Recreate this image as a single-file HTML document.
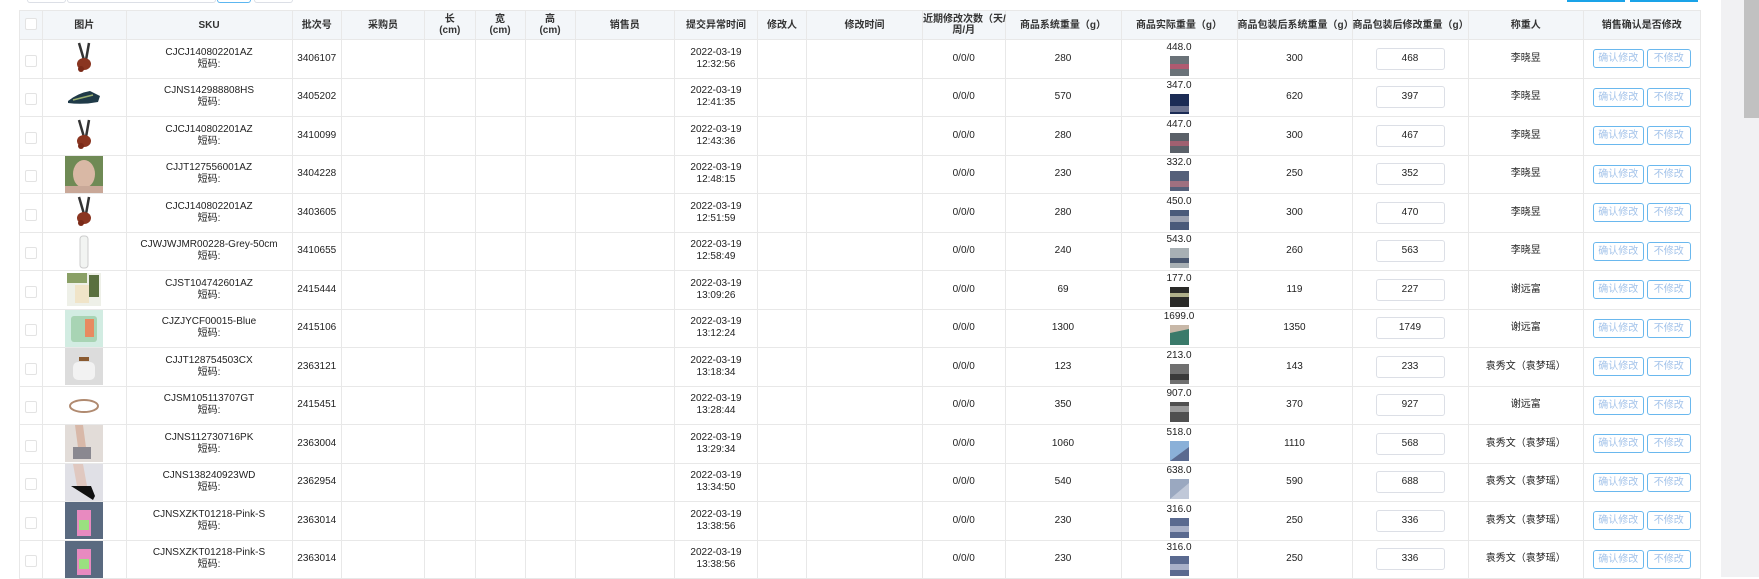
<!DOCTYPE html>
<html><head><meta charset="utf-8">
<style>
*{box-sizing:border-box;margin:0;padding:0}
body{width:1759px;height:577px;overflow:hidden;background:#fff;font-family:"Liberation Sans","Noto Sans CJK SC",sans-serif;font-size:10px;color:#222;position:relative}
.tb{position:absolute;top:0;height:3px;border:1px solid #dcdfe6;border-top:none;border-radius:0 0 3px 3px}
.bb{position:absolute;top:0;height:2px;background:#1aa3e8}
table{position:absolute;left:19px;top:10px;border-collapse:collapse;table-layout:fixed;width:1680px}
td,th{border:1px solid #e8e8e8;text-align:center;vertical-align:middle;line-height:12px;overflow:hidden;white-space:nowrap}
th{background:#f3f6f9;height:29px;font-weight:bold;color:#333;font-size:10px;line-height:11px}
td{height:38.5px}
.cb{display:inline-block;width:12px;height:12px;border:1px solid #e3e3e3;border-radius:2px;background:#fff;margin-top:8px}
.im{display:block;width:38px;height:37px;margin:0 auto}
.th{display:block;width:19px;height:20px;margin:2px auto 0}
.inp{display:inline-block;width:69px;height:22px;border:1px solid #dcdfe6;border-radius:3px;line-height:20px;font-size:10px}
.b1,.b2{display:inline-block;height:19px;line-height:17px;border:1px solid #6ab8ee;border-radius:3px;color:#a3c3ea;font-size:10px;background:#fff}
.b1{width:51px}.b2{width:44px;margin-left:3px}
.sc{position:absolute;left:1721px;top:0;width:38px;height:577px;background:#f1f1f3}
.th2{position:absolute;left:1744px;top:0;width:15px;height:118px;background:#c1c1c1}
</style></head><body>
<div class="tb" style="left:27px;width:39px"></div>
<div class="tb" style="left:67px;width:149px"></div>
<div class="tb" style="left:217px;width:34px;border-color:#5cb6f0"></div>
<div class="tb" style="left:254px;width:39px"></div>
<div class="bb" style="left:1567px;width:58px"></div>
<div class="bb" style="left:1630px;width:68px"></div>
<table>
<colgroup>
<col style="width:23px"><col style="width:83.5px"><col style="width:166px"><col style="width:49.5px"><col style="width:83px"><col style="width:50.5px"><col style="width:50px"><col style="width:50px"><col style="width:99.5px"><col style="width:83px"><col style="width:49px"><col style="width:116px"><col style="width:82.5px"><col style="width:116px"><col style="width:116px"><col style="width:115px"><col style="width:116px"><col style="width:115.5px"><col style="width:116.5px">
</colgroup>
<tr><th><span class="cb" style="margin-top:0"></span></th><th>图片</th><th>SKU</th><th>批次号</th><th>采购员</th><th>长<br>(cm)</th><th>宽<br>(cm)</th><th>高<br>(cm)</th><th>销售员</th><th>提交异常时间</th><th>修改人</th><th>修改时间</th><th style="overflow:visible">近期修改次数（天/<br>周/月</th><th>商品系统重量（g）</th><th>商品实际重量（g）</th><th>商品包装后系统重量（g）</th><th>商品包装后修改重量（g）</th><th>称重人</th><th>销售确认是否修改</th></tr>
<tr><td><span class="cb"></span></td><td><svg class="im" viewBox="0 0 38 37"><path d="M14 3l5 17M24 3l-3 17" stroke="#333" stroke-width="2.5"/><ellipse cx="19" cy="24" rx="7" ry="6" fill="#8a3520"/><circle cx="16" cy="29" r="3" fill="#7a2a18"/></svg></td><td>CJCJ140802201AZ<br>短码:</td><td>3406107</td><td></td><td></td><td></td><td></td><td></td><td>2022-03-19<br>12:32:56</td><td></td><td></td><td>0/0/0</td><td>280</td><td>448.0<svg class="th" viewBox="0 0 19 20"><rect width="19" height="20" fill="#6a7278"/><rect y="8" width="19" height="5" fill="#b05a70"/></svg></td><td>300</td><td><span class="inp">468</span></td><td>李晓昱</td><td><span class="b1">确认修改</span><span class="b2">不修改</span></td></tr>
<tr><td><span class="cb"></span></td><td><svg class="im" viewBox="0 0 38 37"><path d="M3 22q10-8 22-10l10 5-2 6q-15 3-30 1z" fill="#1f3a48"/><path d="M8 21l20-5" stroke="#9ab070" stroke-width="1.5"/></svg></td><td>CJNS142988808HS<br>短码:</td><td>3405202</td><td></td><td></td><td></td><td></td><td></td><td>2022-03-19<br>12:41:35</td><td></td><td></td><td>0/0/0</td><td>570</td><td>347.0<svg class="th" viewBox="0 0 19 20"><rect width="19" height="20" fill="#1c2c55"/><rect y="12" width="19" height="6" fill="#6c7390"/></svg></td><td>620</td><td><span class="inp">397</span></td><td>李晓昱</td><td><span class="b1">确认修改</span><span class="b2">不修改</span></td></tr>
<tr><td><span class="cb"></span></td><td><svg class="im" viewBox="0 0 38 37"><path d="M14 3l5 17M24 3l-3 17" stroke="#333" stroke-width="2.5"/><ellipse cx="19" cy="24" rx="7" ry="6" fill="#8a3520"/><circle cx="16" cy="29" r="3" fill="#7a2a18"/></svg></td><td>CJCJ140802201AZ<br>短码:</td><td>3410099</td><td></td><td></td><td></td><td></td><td></td><td>2022-03-19<br>12:43:36</td><td></td><td></td><td>0/0/0</td><td>280</td><td>447.0<svg class="th" viewBox="0 0 19 20"><rect width="19" height="20" fill="#5a6068"/><rect y="8" width="19" height="5" fill="#a06070"/></svg></td><td>300</td><td><span class="inp">467</span></td><td>李晓昱</td><td><span class="b1">确认修改</span><span class="b2">不修改</span></td></tr>
<tr><td><span class="cb"></span></td><td><svg class="im" viewBox="0 0 38 37"><rect width="38" height="37" fill="#6f8a55"/><ellipse cx="19" cy="18" rx="11" ry="14" fill="#d9b8a5"/><rect y="30" width="38" height="7" fill="#c9a898"/></svg></td><td>CJJT127556001AZ<br>短码:</td><td>3404228</td><td></td><td></td><td></td><td></td><td></td><td>2022-03-19<br>12:48:15</td><td></td><td></td><td>0/0/0</td><td>230</td><td>332.0<svg class="th" viewBox="0 0 19 20"><rect width="19" height="20" fill="#55607a"/><rect y="10" width="19" height="6" fill="#a07080"/></svg></td><td>250</td><td><span class="inp">352</span></td><td>李晓昱</td><td><span class="b1">确认修改</span><span class="b2">不修改</span></td></tr>
<tr><td><span class="cb"></span></td><td><svg class="im" viewBox="0 0 38 37"><path d="M14 3l5 17M24 3l-3 17" stroke="#333" stroke-width="2.5"/><ellipse cx="19" cy="24" rx="7" ry="6" fill="#8a3520"/><circle cx="16" cy="29" r="3" fill="#7a2a18"/></svg></td><td>CJCJ140802201AZ<br>短码:</td><td>3403605</td><td></td><td></td><td></td><td></td><td></td><td>2022-03-19<br>12:51:59</td><td></td><td></td><td>0/0/0</td><td>280</td><td>450.0<svg class="th" viewBox="0 0 19 20"><rect width="19" height="20" fill="#4a5a7a"/><rect y="6" width="19" height="6" fill="#9aa0b0"/></svg></td><td>300</td><td><span class="inp">470</span></td><td>李晓昱</td><td><span class="b1">确认修改</span><span class="b2">不修改</span></td></tr>
<tr><td><span class="cb"></span></td><td><svg class="im" viewBox="0 0 38 37"><rect x="15" y="3" width="8" height="32" rx="3" fill="#f2f4f2" stroke="#ccc"/></svg></td><td>CJWJWJMR00228-Grey-50cm<br>短码:</td><td>3410655</td><td></td><td></td><td></td><td></td><td></td><td>2022-03-19<br>12:58:49</td><td></td><td></td><td>0/0/0</td><td>240</td><td>543.0<svg class="th" viewBox="0 0 19 20"><rect width="19" height="20" fill="#a8b0b4"/><rect y="10" width="19" height="5" fill="#4a5870"/></svg></td><td>260</td><td><span class="inp">563</span></td><td>李晓昱</td><td><span class="b1">确认修改</span><span class="b2">不修改</span></td></tr>
<tr><td><span class="cb"></span></td><td><svg class="im" viewBox="0 0 38 37"><rect x="2" y="2" width="34" height="33" fill="#eef0e8"/><rect x="2" y="2" width="20" height="10" fill="#8aa066"/><rect x="24" y="4" width="10" height="22" fill="#5a7040"/><rect x="10" y="14" width="14" height="18" fill="#f0e4c8"/></svg></td><td>CJST104742601AZ<br>短码:</td><td>2415444</td><td></td><td></td><td></td><td></td><td></td><td>2022-03-19<br>13:09:26</td><td></td><td></td><td>0/0/0</td><td>69</td><td>177.0<svg class="th" viewBox="0 0 19 20"><rect width="19" height="20" fill="#2a2a28"/><rect y="6" width="19" height="4" fill="#b0b08a"/></svg></td><td>119</td><td><span class="inp">227</span></td><td>谢远富</td><td><span class="b1">确认修改</span><span class="b2">不修改</span></td></tr>
<tr><td><span class="cb"></span></td><td><svg class="im" viewBox="0 0 38 37"><rect width="38" height="37" fill="#d2ece2"/><rect x="6" y="6" width="26" height="26" rx="3" fill="#a8d4b4"/><rect x="20" y="9" width="9" height="18" fill="#e88a60"/></svg></td><td>CJZJYCF00015-Blue<br>短码:</td><td>2415106</td><td></td><td></td><td></td><td></td><td></td><td>2022-03-19<br>13:12:24</td><td></td><td></td><td>0/0/0</td><td>1300</td><td>1699.0<svg class="th" viewBox="0 0 19 20"><rect width="19" height="20" fill="#c8b8a8"/><path d="M0 20L0 8 19 4 19 20z" fill="#3a7a6a"/></svg></td><td>1350</td><td><span class="inp">1749</span></td><td>谢远富</td><td><span class="b1">确认修改</span><span class="b2">不修改</span></td></tr>
<tr><td><span class="cb"></span></td><td><svg class="im" viewBox="0 0 38 37"><rect width="38" height="37" fill="#dcdcdc"/><rect x="8" y="14" width="22" height="18" rx="5" fill="#f2f2f2"/><rect x="14" y="9" width="10" height="4" fill="#8a5a30"/></svg></td><td>CJJT128754503CX<br>短码:</td><td>2363121</td><td></td><td></td><td></td><td></td><td></td><td>2022-03-19<br>13:18:34</td><td></td><td></td><td>0/0/0</td><td>123</td><td>213.0<svg class="th" viewBox="0 0 19 20"><rect width="19" height="20" fill="#707070"/><rect y="10" width="19" height="6" fill="#3a3a3a"/></svg></td><td>143</td><td><span class="inp">233</span></td><td>袁秀文（袁梦瑶）</td><td><span class="b1">确认修改</span><span class="b2">不修改</span></td></tr>
<tr><td><span class="cb"></span></td><td><svg class="im" viewBox="0 0 38 37"><ellipse cx="19" cy="19" rx="14" ry="6" fill="none" stroke="#b08a70" stroke-width="2"/></svg></td><td>CJSM105113707GT<br>短码:</td><td>2415451</td><td></td><td></td><td></td><td></td><td></td><td>2022-03-19<br>13:28:44</td><td></td><td></td><td>0/0/0</td><td>350</td><td>907.0<svg class="th" viewBox="0 0 19 20"><rect width="19" height="20" fill="#505050"/><rect y="4" width="19" height="6" fill="#9a9a9a"/></svg></td><td>370</td><td><span class="inp">927</span></td><td>谢远富</td><td><span class="b1">确认修改</span><span class="b2">不修改</span></td></tr>
<tr><td><span class="cb"></span></td><td><svg class="im" viewBox="0 0 38 37"><rect width="38" height="37" fill="#e2dcd8"/><path d="M10 0l4 30h8L18 0z" fill="#d8b8a8"/><rect x="8" y="22" width="18" height="12" fill="#8a8890"/></svg></td><td>CJNS112730716PK<br>短码:</td><td>2363004</td><td></td><td></td><td></td><td></td><td></td><td>2022-03-19<br>13:29:34</td><td></td><td></td><td>0/0/0</td><td>1060</td><td>518.0<svg class="th" viewBox="0 0 19 20"><rect width="19" height="20" fill="#8ab0d8"/><path d="M0 20L19 6V20z" fill="#5a6a90"/></svg></td><td>1110</td><td><span class="inp">568</span></td><td>袁秀文（袁梦瑶）</td><td><span class="b1">确认修改</span><span class="b2">不修改</span></td></tr>
<tr><td><span class="cb"></span></td><td><svg class="im" viewBox="0 0 38 37"><rect width="38" height="37" fill="#e0e0e6"/><path d="M8 0l4 22h10L18 0z" fill="#e0c8c0"/><path d="M6 22h20l4 10-2 4z" fill="#111"/></svg></td><td>CJNS138240923WD<br>短码:</td><td>2362954</td><td></td><td></td><td></td><td></td><td></td><td>2022-03-19<br>13:34:50</td><td></td><td></td><td>0/0/0</td><td>540</td><td>638.0<svg class="th" viewBox="0 0 19 20"><rect width="19" height="20" fill="#9aa8c0"/><path d="M0 20L19 4V20z" fill="#c0c8d8"/></svg></td><td>590</td><td><span class="inp">688</span></td><td>袁秀文（袁梦瑶）</td><td><span class="b1">确认修改</span><span class="b2">不修改</span></td></tr>
<tr><td><span class="cb"></span></td><td><svg class="im" viewBox="0 0 38 37"><rect width="38" height="37" fill="#5a6a80"/><rect x="12" y="8" width="14" height="26" fill="#e88ac0"/><rect x="14" y="18" width="10" height="10" fill="#9ae080"/></svg></td><td>CJNSXZKT01218-Pink-S<br>短码:</td><td>2363014</td><td></td><td></td><td></td><td></td><td></td><td>2022-03-19<br>13:38:56</td><td></td><td></td><td>0/0/0</td><td>230</td><td>316.0<svg class="th" viewBox="0 0 19 20"><rect width="19" height="20" fill="#5a6a90"/><rect y="8" width="19" height="6" fill="#a8b0c8"/></svg></td><td>250</td><td><span class="inp">336</span></td><td>袁秀文（袁梦瑶）</td><td><span class="b1">确认修改</span><span class="b2">不修改</span></td></tr>
<tr><td><span class="cb"></span></td><td><svg class="im" viewBox="0 0 38 37"><rect width="38" height="37" fill="#5a6a80"/><rect x="12" y="8" width="14" height="26" fill="#e88ac0"/><rect x="14" y="18" width="10" height="10" fill="#9ae080"/></svg></td><td>CJNSXZKT01218-Pink-S<br>短码:</td><td>2363014</td><td></td><td></td><td></td><td></td><td></td><td>2022-03-19<br>13:38:56</td><td></td><td></td><td>0/0/0</td><td>230</td><td>316.0<svg class="th" viewBox="0 0 19 20"><rect width="19" height="20" fill="#5a6a90"/><rect y="8" width="19" height="6" fill="#a8b0c8"/></svg></td><td>250</td><td><span class="inp">336</span></td><td>袁秀文（袁梦瑶）</td><td><span class="b1">确认修改</span><span class="b2">不修改</span></td></tr>
</table>
<div class="sc"></div><div class="th2"></div>
</body></html>
